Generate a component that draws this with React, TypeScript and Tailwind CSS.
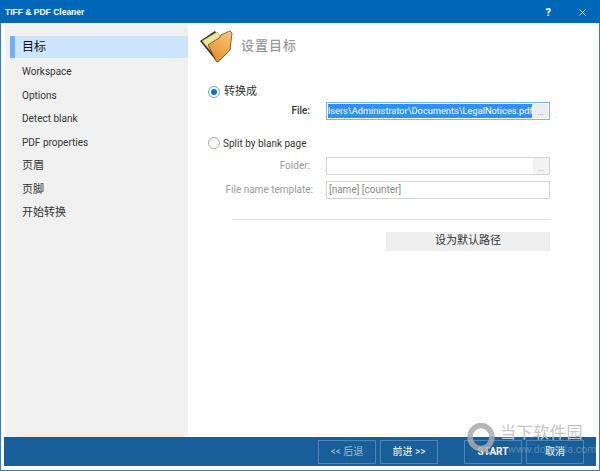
import { X } from 'lucide-react';

const font = "font-['Roboto','Noto_Sans_CJK_SC',sans-serif]";

const navItems = [
  { label: 'Workspace', cjk: false },
  { label: 'Options', cjk: false },
  { label: 'Detect blank', cjk: false },
  { label: 'PDF properties', cjk: false },
  { label: '页眉', cjk: true },
  { label: '页脚', cjk: true },
  { label: '开始转换', cjk: true },
];

function FolderIcon() {
  return (
    <svg width="33" height="33" viewBox="0 0 33 33">
      <defs>
        <linearGradient id="folderFront" x1="0.8" y1="0" x2="0.2" y2="1">
          <stop offset="0" stopColor="#f8c57a" />
          <stop offset="1" stopColor="#e8892a" />
        </linearGradient>
      </defs>
      <path d="M0 11 L15 1 L28 20 L17 32 Z" fill="#2e2a1c" />
      <path d="M2 11 L17 2 L26 14 L13 24 Z" fill="#e8e89c" stroke="#a8a468" strokeWidth="0.5" />
      <path d="M8 15 L19 8 L21 5 L30 1 L32 3 L30 20 L18 32 L16 31 Z" fill="url(#folderFront)" stroke="#6b4310" strokeWidth="0.8" />
    </svg>
  );
}

function Radio({ checked }: { checked?: boolean }) {
  return (
    <span
      className={`flex h-[12px] w-[12px] shrink-0 items-center justify-center rounded-full border bg-white ${
        checked ? 'border-[#5aa7e8]' : 'border-[#a8a8a8]'
      }`}
    >
      {checked && <span className="h-[6px] w-[6px] rounded-full bg-[#0a6fd0]" />}
    </span>
  );
}

function FooterButton({ label, dim, bold }: { label: string; dim?: boolean; bold?: boolean }) {
  return (
    <div
      className={`flex h-[24px] w-[58px] items-center justify-center border border-[#4f86b3] text-[10px] ${
        dim ? 'text-[#9dbcd6]' : 'text-white'
      } ${bold ? 'font-bold' : ''}`}
    >
      {label}
    </div>
  );
}

function Watermark() {
  return (
    <div className="absolute left-[467px] top-[423px] flex items-start gap-[4px]">
      <svg width="29" height="32" viewBox="0 0 29 32">
        <ellipse cx="14" cy="14" rx="11" ry="11.5" fill="none" stroke="#a9a9a9" strokeWidth="5.5" opacity="0.85" />
        <path d="M17 23 L25 32 L11 27 Z" fill="#a9a9a9" opacity="0.85" />
      </svg>
      <div className="flex flex-col">
        <span className="text-[16px] leading-[19px] tracking-[0.6px] text-[#c4c4c4]">当下软件园</span>
        <span className="mt-[2px] pl-[8px] text-[10.5px] leading-[12px] text-[#8fb0cc] opacity-50">www.downxia.com</span>
      </div>
    </div>
  );
}

export default function App() {
  return (
    <div className={`relative flex h-[471px] w-[600px] flex-col overflow-hidden bg-[#2d83c9] ${font}`}>
      <div className="flex h-[23px] shrink-0 items-center justify-between bg-[#0067b8] pl-[5px] pr-[12px] pt-[1px]">
        <span className="font-['Liberation_Sans',sans-serif] text-[8.5px] font-bold text-white">TIFF &amp; PDF Cleaner</span>
        <div className="flex items-center gap-[26px]">
          <span className="text-[11px] font-bold leading-none text-white">?</span>
          <X className="h-[11px] w-[11px] text-white" strokeWidth={1.5} />
        </div>
      </div>

      <div className="mx-[1px] mb-[1px] flex min-h-0 flex-1 flex-col bg-white">
        <div className="flex min-h-0 flex-1 pl-[4px] pt-[2px]">
          <aside className="flex w-[183px] shrink-0 flex-col bg-[#f0f0f0] pl-[5px] pt-[11px] text-[#333]">
            <div className="flex h-[22px] items-center border-l-[5px] border-[#6db2f5] bg-[#cce4fc] pl-[7px] text-[12px] text-[#111]">
              目标
            </div>
            <div className="mt-[2px] flex flex-col">
              {navItems.map(item => (
                <div
                  key={item.label}
                  className={`flex h-[23.6px] items-center pl-[12px] ${item.cjk ? 'text-[11px]' : 'text-[10px]'}`}
                >
                  {item.label}
                </div>
              ))}
            </div>
          </aside>

          <main className="flex min-w-0 flex-1 flex-col pl-[12px] pr-[49px] pt-[5px]">
            <div className="flex items-center gap-[8px]">
              <FolderIcon />
              <span className="mb-[2px] text-[13px] font-medium tracking-[1px] text-[#999]">设置目标</span>
            </div>

            <div className="mt-[21px] flex items-center gap-[4px] pl-[8px] text-[11px] text-[#333]">
              <Radio checked />
              <span>转换成</span>
            </div>

            <div className="mt-[1px] flex items-center">
              <span className="w-[126px] shrink-0 pr-[16px] text-right text-[10px] font-medium text-[#333]">File:</span>
              <div className="flex h-[18px] flex-1 items-center gap-[1px] overflow-hidden border border-[#7db5ec] bg-white pl-[1px] pr-[1px]">
                <span className="min-w-0 flex-1 overflow-hidden whitespace-nowrap bg-[#3390f0] text-[9.25px] leading-[14px] text-white">
                  lsers\Administrator\Documents\LegalNotices.pdf
                </span>
                <span className="flex h-[14px] w-[15px] shrink-0 items-end justify-center bg-[#ececec] text-[8px] leading-[10px] text-[#999]">
                  ...
                </span>
              </div>
            </div>

            <div className="mt-[16px] flex items-center gap-[3px] pl-[8px] text-[10px] text-[#333]">
              <Radio />
              <span>Split by blank page</span>
            </div>

            <div className="mt-[6px] flex items-center">
              <span className="w-[126px] shrink-0 pr-[16px] text-right text-[10px] text-[#999]">Folder:</span>
              <div className="flex h-[18px] flex-1 items-center justify-end border border-[#d4d4d4] bg-white">
                <span className="flex h-[16px] w-[16px] items-end justify-center bg-[#f2f2f2] text-[8px] leading-[11px] text-[#999]">
                  ...
                </span>
              </div>
            </div>

            <div className="mt-[6px] flex items-center">
              <span className="w-[126px] shrink-0 pr-[13px] text-right text-[10px] text-[#999]">File name template:</span>
              <div className="flex h-[18px] flex-1 items-center border border-[#d4d4d4] bg-white pl-[2px] text-[10px] text-[#888]">
                [name] [counter]
              </div>
            </div>

            <div className="ml-[32px] mt-[20px] h-[1px] bg-[#dcdcdc]" />

            <div className="mt-[12px] flex justify-end">
              <div className="flex h-[19px] w-[164px] items-center justify-center bg-[#eeeeee] text-[11px] text-[#333]">
                设为默认路径
              </div>
            </div>
          </main>
        </div>

        <footer className="mx-[3px] mb-[4px] flex h-[29px] shrink-0 items-center justify-end gap-[4px] bg-[#185f9a] pr-[12px]">
          <FooterButton label="<< 后退" dim />
          <div className="mr-[22px]">
            <FooterButton label="前进 >>" />
          </div>
          <FooterButton label="START" bold />
          <FooterButton label="取消" />
        </footer>
      </div>

      <Watermark />
    </div>
  );
}
